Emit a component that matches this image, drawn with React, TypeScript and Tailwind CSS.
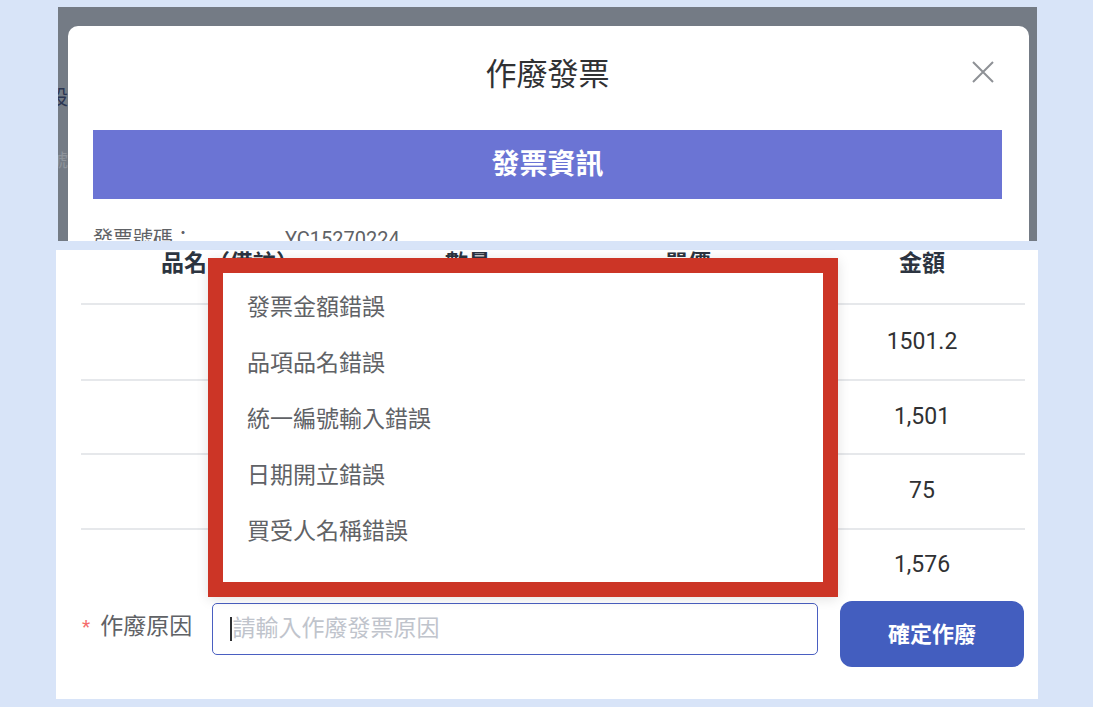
import React from 'react';

const REASONS = ['發票金額錯誤', '品項品名錯誤', '統一編號輸入錯誤', '日期開立錯誤', '買受人名稱錯誤'];
const AMOUNTS = ['1501.2', '1,501', '75', '1,576'];
const ROW_HEIGHTS = ['h-[74px]', 'h-[72px]', 'h-[73px]', 'h-[71px]'];

function CloseIcon() {
  return (
    <svg width="22" height="22" viewBox="0 0 22 22" fill="none">
      <path d="M1 1L21 21M21 1L1 21" stroke="#8e9196" strokeWidth="2" />
    </svg>
  );
}

export default function App() {
  return (
    <div className="min-h-[707px] w-full bg-[#d8e4f8] font-['Roboto','Noto_Sans_CJK_TC',sans-serif] pt-[7px]">
      {/* Top: modal over dimmed page */}
      <div className="ml-[58px] flex h-[234px] w-[979px] overflow-hidden bg-[#747b85]">
        {/* edge of the page behind the overlay */}
        <div className="flex w-[10px] shrink-0 flex-col overflow-hidden">
          <div className="mt-[74px] flex h-[34px] justify-end overflow-hidden whitespace-nowrap text-[20px] leading-[34px] text-[#2b3552]">
            <span className="shrink-0">設</span>
          </div>
          <div className="mt-[32px] flex h-[28px] justify-end overflow-hidden whitespace-nowrap text-[18px] leading-[28px] text-[#8e949c]">
            <span className="shrink-0">號</span>
          </div>
        </div>

        <div className="mr-[8px] mt-[19px] flex-1 rounded-t-[10px] bg-white pl-[25px] pr-[27px]">
          <div className="relative flex h-[104px] items-center justify-center pb-[8px]">
            <span className="text-[31px] leading-none text-[#303133]">作廢發票</span>
            <span className="absolute right-[8px] top-[35px]">
              <CloseIcon />
            </span>
          </div>
          <div className="flex h-[69px] items-center justify-center bg-[#6b74d4] text-[28px] font-bold text-white">
            發票資訊
          </div>
          <div className="mt-[28px] flex text-[20px] leading-[24px] text-[#606266]">
            <span className="w-[192px]">發票號碼：</span>
            <span>YC15270224</span>
          </div>
        </div>
      </div>

      {/* Bottom: table, reason selector */}
      <div className="relative ml-[56px] mt-[9px] h-[449px] w-[982px] bg-white pl-[25px] pr-[13px]">
        <div className="grid grid-cols-[298px_178px_262px_206px] text-center">
          {['品名（備註）', '數量', '單價', '金額'].map((h) => (
            <div key={h} className="h-[53px] pt-[2px] text-[23px] font-bold leading-[24px] text-[#2c3440]">
              {h}
            </div>
          ))}
        </div>
        {AMOUNTS.map((a, i) => (
          <div key={a}>
            <div className="h-[2px] bg-[#e6e8eb]" />
            <div className={`grid grid-cols-[298px_178px_262px_206px] items-center text-center ${ROW_HEIGHTS[i]}`}>
              <div />
              <div />
              <div />
              <div className="text-[23px] text-[#303133]">{a}</div>
            </div>
          </div>
        ))}

        <div className="flex items-start">
          <div className="flex h-[52px] w-[131px] items-center text-[23px] text-[#606266]">
            <span className="ml-[1px] mr-[10px] text-[19px] text-[#f56c6c]">*</span>
            作廢原因
          </div>
          <div className="mt-[2px] flex h-[52px] w-[606px] items-center rounded-[5px] border border-[#4a5fc1] pl-[17px]">
            <span className="mr-[1px] h-[24px] w-[1.5px] bg-[#303133]" />
            <span className="text-[23px] text-[#c0c4cc]">請輸入作廢發票原因</span>
          </div>
          <button
            type="button"
            className="ml-[22px] flex h-[66px] w-[184px] items-center justify-center rounded-[12px] bg-[#435ebf] text-[22px] font-bold text-white"
          >
            確定作廢
          </button>
        </div>

        {/* Reason dropdown (highlighted) */}
        <div className="absolute left-[152px] top-[8px] h-[339px] w-[630px] border-[15px] border-[#cc3526] bg-white shadow-[0_2px_12px_rgba(0,0,0,0.12)]">
          <div className="pt-[7px]">
            {REASONS.map((r) => (
              <div key={r} className="flex h-[56px] items-center pl-[24px] text-[23px] text-[#606266]">
                {r}
              </div>
            ))}
          </div>
        </div>
      </div>
    </div>
  );
}
